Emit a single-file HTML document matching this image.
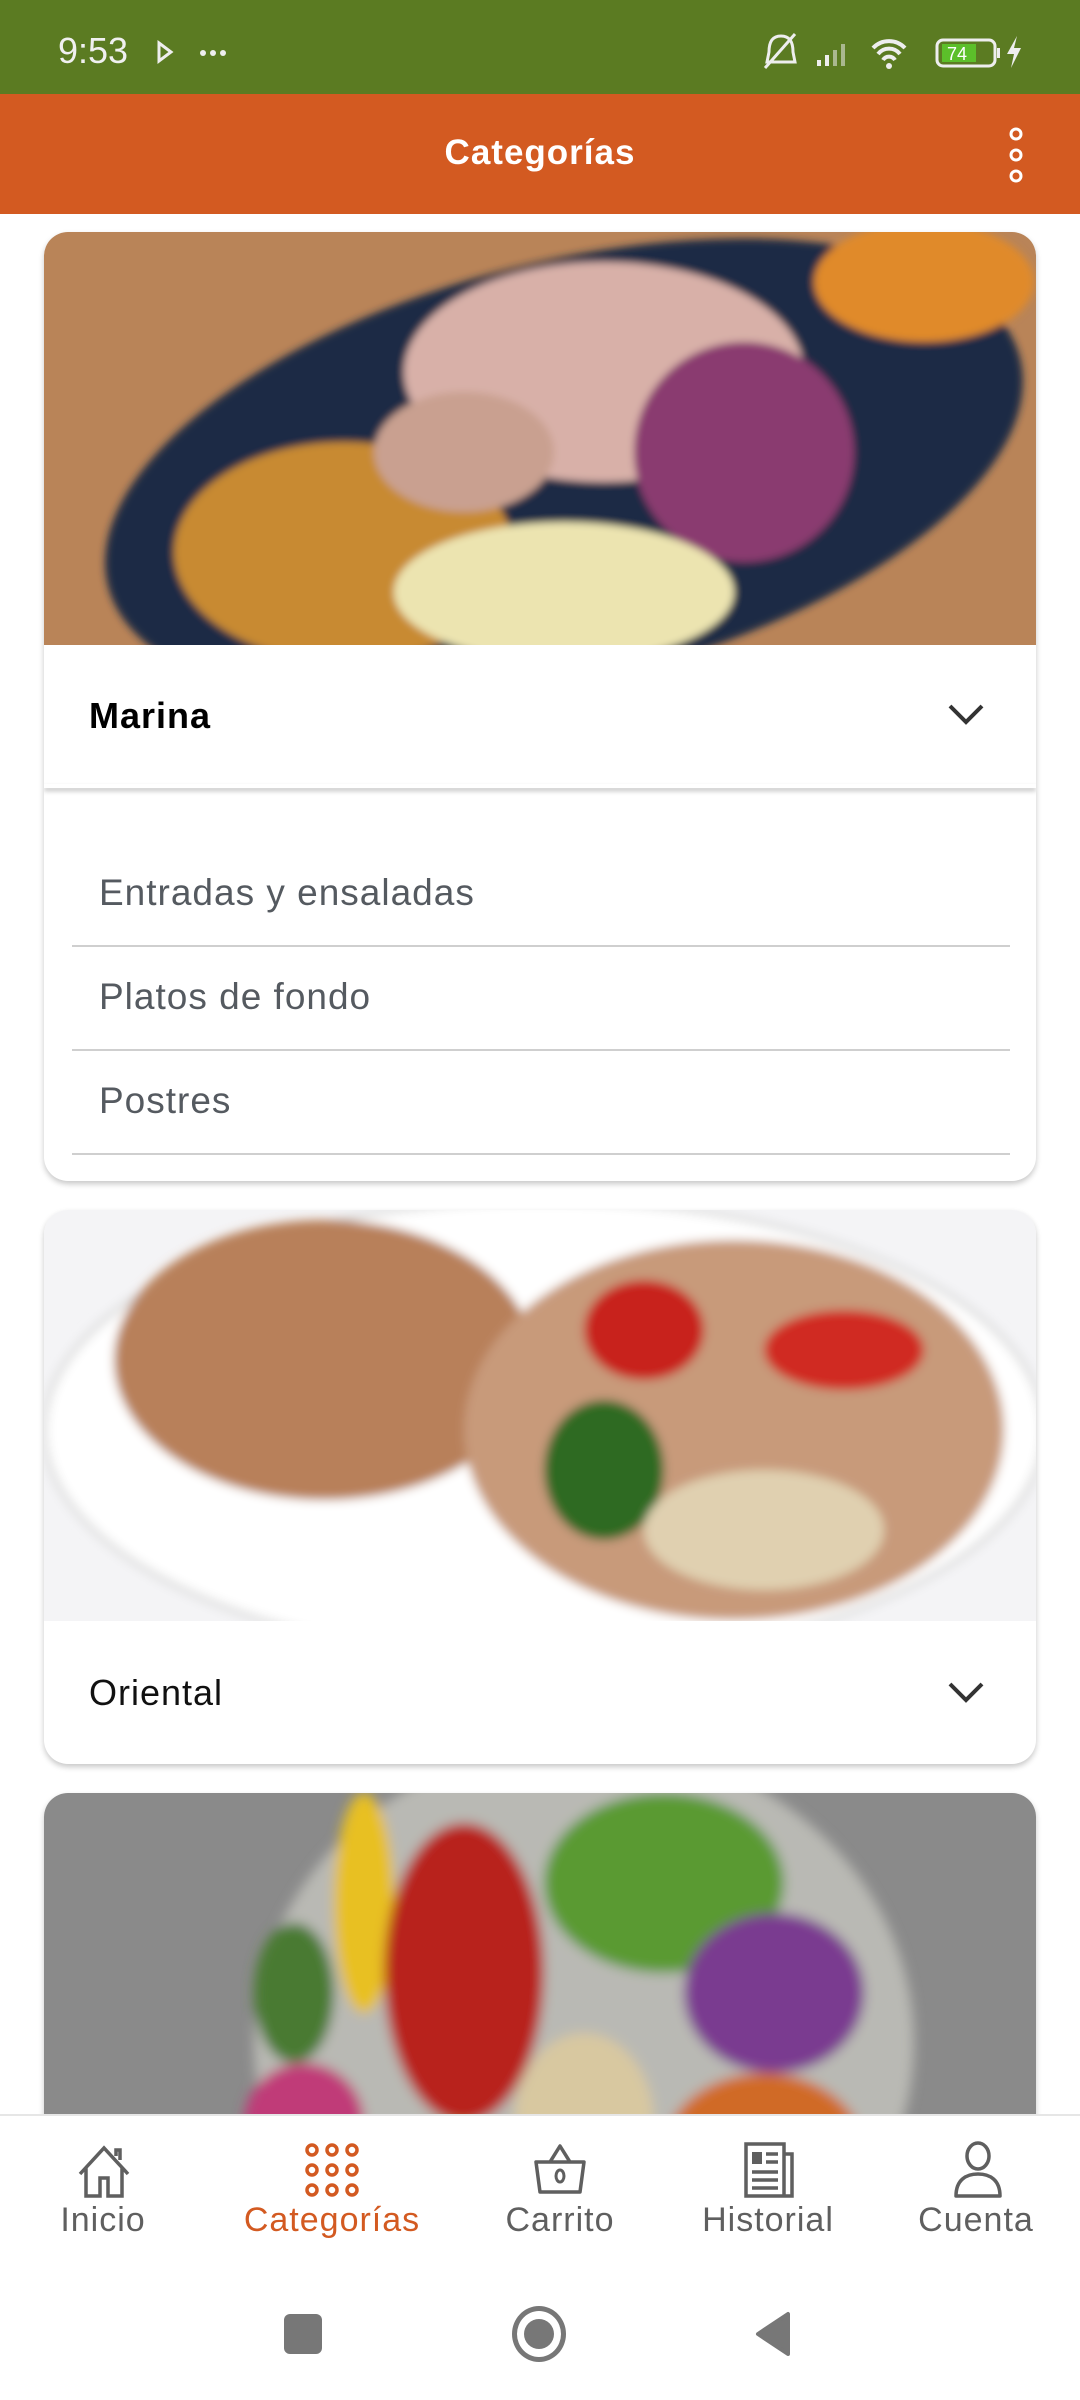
<!DOCTYPE html>
<html><head><meta charset="utf-8"><style>
*{margin:0;padding:0;box-sizing:border-box}
body{width:1080px;height:2400px;overflow:hidden;background:#fff;font-family:"Liberation Sans",sans-serif;position:relative}
.abs{position:absolute}
.card{position:absolute;left:44px;width:992px;background:#fff;border-radius:24px;box-shadow:0 3px 6px rgba(0,0,0,.22);overflow:hidden}
.sub{position:absolute;left:99px;font-size:37px;color:#555a60;letter-spacing:1px}
.line{position:absolute;left:72px;width:938px;height:2px;background:#cfcfcf}
.nl{position:absolute;top:2201px;font-size:34px;color:#5f5f5f;transform:translateX(-50%);letter-spacing:1px}
</style></head><body>
<div class="abs" style="left:0;top:0;width:1080px;height:94px;background:#5b7b22"></div>
<div class="abs" style="left:58px;top:30px;font-size:36px;color:#f0f0f0">9:53</div>
<svg class="abs" style="left:155px;top:40px" width="80" height="24"><path d="M4 3 L16 12 L4 21 Z" fill="none" stroke="#eee" stroke-width="3"/><circle cx="48" cy="13" r="3" fill="#eee"/><circle cx="58" cy="13" r="3" fill="#eee"/><circle cx="68" cy="13" r="3" fill="#eee"/></svg>
<svg class="abs" style="left:755px;top:30px" width="300" height="44">
<path d="M26 6 C16 6 14 14 14 22 L12 32 L40 32 L38 22 C38 14 36 6 26 6Z" fill="none" stroke="#eee" stroke-width="3"/><line x1="10" y1="38" x2="40" y2="4" stroke="#eee" stroke-width="3"/>
<rect x="62" y="30" width="4" height="6" fill="#eee"/><rect x="70" y="25" width="4" height="11" fill="#eee"/><rect x="78" y="20" width="4" height="16" fill="#aab890"/><rect x="86" y="14" width="4" height="22" fill="#aab890"/>
<path d="M118 18 a22 22 0 0 1 32 0 M123 24 a14 14 0 0 1 22 0 M128 30 a7 7 0 0 1 12 0" fill="none" stroke="#eee" stroke-width="4"/><circle cx="134" cy="36" r="3" fill="#eee"/>
<rect x="182" y="10" width="58" height="26" rx="6" fill="none" stroke="#eee" stroke-width="3"/><rect x="187" y="14" width="34" height="18" fill="#5cbf2a"/><text x="192" y="30" font-size="18" fill="#fff" font-family="Liberation Sans">74</text><rect x="242" y="18" width="3" height="10" fill="#eee"/>
<path d="M262 6 L252 24 L259 24 L256 38 L266 18 L259 18Z" fill="#eee"/></svg>
<div class="abs" style="left:0;top:94px;width:1080px;height:120px;background:#d35a21"></div>
<div class="abs" style="left:0;top:133px;width:1080px;text-align:center;color:#fff;font-size:35px;font-weight:bold;letter-spacing:1px">Categorías</div>
<svg class="abs" style="left:1006px;top:126px" width="20" height="58"><circle cx="10" cy="8" r="5" fill="none" stroke="#fff" stroke-width="3"/><circle cx="10" cy="29" r="5" fill="none" stroke="#fff" stroke-width="3"/><circle cx="10" cy="50" r="5" fill="none" stroke="#fff" stroke-width="3"/></svg>
<div class="card" style="top:232px;height:949px">
<svg width="992" height="413" style="display:block">
<defs><filter id="b"><feGaussianBlur stdDeviation="4"/></filter></defs>
<rect width="992" height="413" fill="#b98458"/>
<g filter="url(#b)">
<ellipse cx="520" cy="240" rx="470" ry="210" fill="#1e2a44" transform="rotate(-14 520 240)"/>
<ellipse cx="300" cy="320" rx="170" ry="110" fill="#c88a32"/>
<ellipse cx="560" cy="140" rx="200" ry="110" fill="#d8b0a8"/>
<ellipse cx="700" cy="220" rx="110" ry="110" fill="#8a3a70"/>
<ellipse cx="520" cy="360" rx="170" ry="70" fill="#ece4b0"/>
<ellipse cx="880" cy="50" rx="110" ry="60" fill="#e08a2a"/>
<ellipse cx="420" cy="220" rx="90" ry="60" fill="#c9a090"/>
</g></svg>
<div class="abs" style="left:45px;top:463px;font-size:36px;font-weight:bold;color:#000;letter-spacing:1px">Marina</div>
<svg class="abs" style="left:902px;top:470px" width="40" height="26"><path d="M4 4 L20 20 L36 4" fill="none" stroke="#333" stroke-width="4"/></svg>
<div class="abs" style="left:0;top:552px;width:992px;height:4px;box-shadow:0 3px 5px rgba(0,0,0,.25)"></div>
</div>
<div class="sub" style="top:872px">Entradas y ensaladas</div>
<div class="line" style="top:945px"></div>
<div class="sub" style="top:976px">Platos de fondo</div>
<div class="line" style="top:1049px"></div>
<div class="sub" style="top:1080px">Postres</div>
<div class="line" style="top:1153px"></div>
<div class="card" style="top:1210px;height:554px">
<svg width="992" height="411" style="display:block">
<defs><filter id="b2"><feGaussianBlur stdDeviation="5"/></filter></defs>
<rect width="992" height="411" fill="#f4f4f6"/>
<g filter="url(#b2)">
<ellipse cx="500" cy="220" rx="500" ry="230" fill="#fff" stroke="#ddd" stroke-width="6"/>
<ellipse cx="280" cy="150" rx="210" ry="140" fill="#b8805a"/>
<ellipse cx="690" cy="220" rx="270" ry="190" fill="#c89a7a"/>
<ellipse cx="560" cy="260" rx="60" ry="70" fill="#2f6a22"/>
<ellipse cx="600" cy="120" rx="60" ry="50" fill="#c8201c"/>
<ellipse cx="800" cy="140" rx="80" ry="40" fill="#d02a20"/>
<ellipse cx="720" cy="320" rx="120" ry="60" fill="#e0d0b0"/>
</g></svg>
<div class="abs" style="left:45px;top:462px;font-size:36px;color:#111;letter-spacing:1px">Oriental</div>
<svg class="abs" style="left:902px;top:470px" width="40" height="26"><path d="M4 4 L20 20 L36 4" fill="none" stroke="#333" stroke-width="4"/></svg>
</div>
<div class="card" style="top:1793px;height:400px">
<svg width="992" height="400" style="display:block">
<defs><filter id="b3"><feGaussianBlur stdDeviation="6"/></filter></defs>
<rect width="992" height="400" fill="#8a8a8a"/>
<g filter="url(#b3)">
<ellipse cx="540" cy="250" rx="330" ry="300" fill="#b9b9b4"/>
<ellipse cx="320" cy="110" rx="30" ry="110" fill="#e8c020"/>
<ellipse cx="420" cy="180" rx="80" ry="150" fill="#b8201a"/>
<ellipse cx="620" cy="90" rx="120" ry="90" fill="#5a9a30"/>
<ellipse cx="730" cy="200" rx="90" ry="80" fill="#7a3a90"/>
<ellipse cx="540" cy="330" rx="70" ry="90" fill="#d8c8a0"/>
<ellipse cx="720" cy="360" rx="100" ry="80" fill="#d06a28"/>
<ellipse cx="260" cy="330" rx="60" ry="60" fill="#c03a78"/>
<ellipse cx="410" cy="380" rx="80" ry="50" fill="#8ab848"/>
<ellipse cx="250" cy="200" rx="40" ry="70" fill="#4a7a30"/>
</g></svg>
</div>
<div class="abs" style="left:0;top:2114px;width:1080px;height:286px;background:#fff;border-top:2px solid #e6e6e6"></div>
<svg class="abs" style="left:74px;top:2140px" width="60" height="60"><path d="M6 34 L30 8 L54 34 M12 28 V56 H26 V38 H34 V56 H48 V28 M42 16 V10 H46 V20" fill="none" stroke="#5f5f5f" stroke-width="3.5"/></svg>
<svg class="abs" style="left:304px;top:2142px" width="56" height="56"><g fill="none" stroke="#d35a21" stroke-width="3.5"><circle cx="8" cy="8" r="5"/><circle cx="28" cy="8" r="5"/><circle cx="48" cy="8" r="5"/><circle cx="8" cy="28" r="5"/><circle cx="28" cy="28" r="5"/><circle cx="48" cy="28" r="5"/><circle cx="8" cy="48" r="5"/><circle cx="28" cy="48" r="5"/><circle cx="48" cy="48" r="5"/></g></svg>
<svg class="abs" style="left:532px;top:2142px" width="56" height="56"><path d="M4 20 H52 L48 50 H8 Z M18 20 L28 4 L38 20" fill="none" stroke="#5f5f5f" stroke-width="3.5" stroke-linejoin="round"/><ellipse cx="28" cy="34" rx="4" ry="6" fill="none" stroke="#5f5f5f" stroke-width="3"/></svg>
<svg class="abs" style="left:740px;top:2140px" width="56" height="60"><path d="M6 4 H44 V56 H6 Z M44 14 H52 V56 H44" fill="none" stroke="#5f5f5f" stroke-width="3.5"/><rect x="12" y="12" width="10" height="12" fill="#5f5f5f"/><path d="M26 14 H38 M26 22 H38 M12 32 H38 M12 40 H38 M12 48 H38" stroke="#5f5f5f" stroke-width="3.5"/></svg>
<svg class="abs" style="left:950px;top:2140px" width="56" height="60"><ellipse cx="28" cy="16" rx="11" ry="13" fill="none" stroke="#5f5f5f" stroke-width="3.5"/><path d="M6 56 C6 40 16 34 28 34 C40 34 50 40 50 56 Z" fill="none" stroke="#5f5f5f" stroke-width="3.5" stroke-linejoin="round"/></svg>
<div class="nl" style="left:103px">Inicio</div>
<div class="nl" style="left:332px;color:#d35a21">Categorías</div>
<div class="nl" style="left:560px">Carrito</div>
<div class="nl" style="left:768px">Historial</div>
<div class="nl" style="left:976px">Cuenta</div>
<div class="abs" style="left:284px;top:2314px;width:38px;height:40px;border-radius:6px;background:#777"></div>
<div class="abs" style="left:512px;top:2306px;width:54px;height:56px;border-radius:50%;border:5px solid #777"></div>
<div class="abs" style="left:524px;top:2319px;width:30px;height:30px;border-radius:50%;background:#777"></div>
<svg class="abs" style="left:752px;top:2310px" width="40" height="48"><path d="M36 4 V44 L6 24 Z" fill="#777" stroke="#777" stroke-width="4" stroke-linejoin="round"/></svg>
</body></html>
